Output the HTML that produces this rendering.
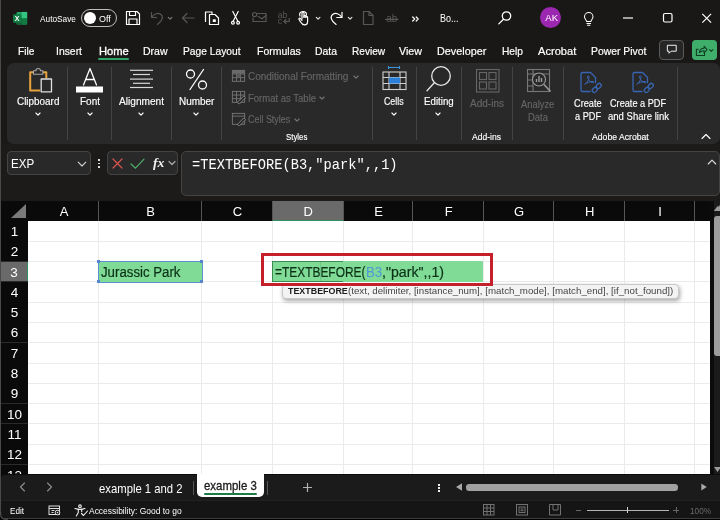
<!DOCTYPE html>
<html>
<head>
<meta charset="utf-8">
<title>Excel</title>
<style>
*{box-sizing:border-box;margin:0;padding:0}
html,body{width:720px;height:520px;overflow:hidden;background:#1b1917;font-family:"Liberation Sans",sans-serif;color:#fff}
#app{position:relative;width:720px;height:520px;background:#1b1917;overflow:hidden;will-change:transform}
.abs{position:absolute}
.t{position:absolute;white-space:nowrap;line-height:1}
/* title bar */
#title{left:0;top:0;width:720px;height:37px;background:#1a1816}
#tabs{left:0;top:37px;width:720px;height:27px;background:#1a1816}
.tab{font-size:11.5px;color:#fff;top:46px;-webkit-text-stroke:.2px #fff}
/* ribbon */
#ribbon{left:7px;top:62.700px;width:712.500px;height:81.800px;background:#292929;border-radius:7px}
.rsep{position:absolute;top:67px;width:1px;height:73px;background:#444}
.rlab{font-size:10.3px;color:#fff;-webkit-text-stroke:.15px currentColor}
.rchev{position:absolute;top:111px}
.dim{color:#666}
/* formula bar */
#fbar{left:0;top:144px;width:720px;height:57px;background:#1d1b19}
#namebox{left:7px;top:151px;width:84px;height:24px;background:#292929;border:1px solid #444;border-radius:4px}
#fbtns{left:107px;top:151px;width:71px;height:24px;background:#292929;border:1px solid #444;border-radius:4px}
#finput{left:181px;top:151px;width:538.800px;height:44.800px;background:#292929;border:1px solid #444;border-radius:5px}
/* grid */
#grid{left:0;top:201px;width:710px;height:273px;background:#fff}
.ch{position:absolute;top:201px;height:19.900px;padding-left:1.500px;background:#0a0a0a;color:#fff;font-size:13px;text-align:center;line-height:21.500px}
.rh{position:absolute;left:1px;width:27.250px;height:20.300px;line-height:20.300px;background:#0a0a0a;color:#fff;font-size:13.500px;text-align:center;padding-top:1px}
.vl{position:absolute;top:221px;width:1px;height:253px;background:#ebebeb}
.hsep{position:absolute;top:201px;width:1px;height:20px;background:#555}
.rsp{position:absolute;left:1px;width:27px;height:1px;background:#2a2a2a}
.hl{position:absolute;left:28.250px;height:1px;width:681.750px;background:#ebebeb}
.ch.sel{background:#6a6a6a;border-bottom:1.200px solid #2f9159}
.rh.sel{background:#6a6a6a;border-right:1.500px solid #2f9159}
.hdl{width:3.200px;height:3.200px;background:#5585cc}
/* bottom */
#sheetbar{left:1px;top:474.200px;width:719px;height:26px;background:#1b1b1c;border-top:1.200px solid #0c0c0c;border-radius:4px 0 0 0}
#status{left:0;top:499.500px;width:720px;height:20.500px;background:#151515;border-top:1.800px solid #212121}
</style>
</head>
<body>
<div id="app">
<div id="title" class="abs"></div>
<div id="tabs" class="abs"></div>

<!-- TITLE BAR -->
<svg class="abs" id="xlicon" style="left:12.500px;top:10.500px" width="15" height="14.500" viewBox="0 0 17 16" preserveAspectRatio="none">
<rect x="4" y="1" width="12" height="14" rx="1.5" fill="#21a366"/><rect x="10" y="1" width="6" height="7" fill="#33c481"/><rect x="10" y="8" width="6" height="7" fill="#107c41"/><rect x="4" y="8" width="6" height="7" fill="#185c37"/>
<rect x="0" y="3.5" width="9.5" height="9.5" rx="1.2" fill="#107c41"/>
<text x="4.75" y="11.2" font-size="8" font-weight="bold" fill="#fff" text-anchor="middle" font-family="Liberation Sans, sans-serif">X</text></svg>
<div class="t" id="autosave" style="left:40px;top:13.500px;font-size:9.8px;color:#fff;transform:scaleX(0.847);transform-origin:0 0">AutoSave</div>
<div class="abs" id="toggle" style="left:81px;top:9px;width:36px;height:18px;border:1px solid #bdbdbd;border-radius:9px"></div>
<div class="abs" style="left:84px;top:12px;width:12px;height:12px;border-radius:6px;background:#fff"></div>
<div class="t" id="offt" style="left:99px;top:13.500px;font-size:9.8px;color:#fff;transform:scaleX(0.915);transform-origin:0 0">Off</div>
<svg class="abs" id="qat" style="left:120px;top:6px" width="320" height="24" viewBox="120 6 320 24" fill="none" stroke="#fff" stroke-width="1.2" stroke-linecap="round" stroke-linejoin="round">
<!-- save -->
<path d="M126.500 11.500h10.500l2.500 2.500v10.500h-13z"/><path d="M129.500 11.500v4h6v-4"/><path d="M129 24.500v-5.500h8v5.500"/>
<!-- undo dim -->
<g stroke="#575757"><path d="M151.500 12.500v5h5"/><path d="M151.800 17.200c2-3.500 6.300-4.800 9-2.800 2.800 2.300 1.800 6.300-3.400 10"/><path d="M168.300 17.300l1.800 1.800 1.800-1.800" stroke="#777"/></g>
<!-- back dim -->
<g stroke="#575757"><path d="M182.500 18h11.500"/><path d="M187 13.500l-4.500 4.500 4.500 4.500"/></g>
<!-- copy/paste -->
<path d="M205.500 21.500v-9.500h6.500v2.500"/><path d="M209.500 14.500h5.500l3.500 3.500v6.500h-9z"/><rect x="212.800" y="19.300" width="3" height="2.700" fill="#fff" stroke="none"/>
<!-- scissors -->
<path d="M232.800 11.500l5.200 10"/><path d="M238.200 11.500l-5.200 10"/><circle cx="232.900" cy="22.800" r="1.400"/><circle cx="238.100" cy="22.800" r="1.400"/>
<!-- mail dim -->
<g stroke="#575757"><path d="M257.500 13.500h8.500v8h-13v-3.500"/><path d="M258.300 16.500l3.700 2.300 4-3.300"/><circle cx="254.600" cy="14.600" r="2.100"/></g>
<!-- abc dim -->
<g stroke="none" fill="#575757" font-family="Liberation Sans, sans-serif" font-size="8.800"><text x="277.700" y="17.800">ab</text><text x="277.700" y="24">c</text></g>
<g stroke="#575757"><path d="M284 21.500h5.200v-3.200"/><path d="M286 19.500l-2 2 2 2"/></g>
<!-- touch -->
<path d="M302 19v-6c0-1.400 2-1.400 2 0v4.500"/><path d="M304 17v-.8c0-1.200 1.800-1.200 1.800 0v1.300"/><path d="M305.800 17.200c0-1.200 1.800-1.200 1.800 0v4.300c0 2-1 3.300-3 3.300s-3-1-4-2.800l-1.600-2.600c-.5-1 .8-1.700 1.500-.8l1.500 1.800"/><path d="M300 16c-1.200-2.300.3-4.500 3-4.500s4 2 3.300 3.800"/>
<path d="M316.300 17.300l1.800 1.800 1.800-1.800" stroke="#ddd"/>
<!-- redo -->
<path d="M342 12.300v5.200h-5.200"/><path d="M341.700 17.200c-2-3.500-6.300-4.800-9-2.800-2.800 2.300-1.800 6.300 3.400 10"/><path d="M348.300 17.300l1.800 1.800 1.800-1.800" stroke="#ddd"/>
<!-- new doc dim -->
<g stroke="#575757"><path d="M363.500 11.500h5.500l4 4v9h-9.500z"/><path d="M369 11.500v4h4"/></g>
<!-- ab strike dim -->
<g stroke="none" fill="#575757" font-family="Liberation Sans, sans-serif" font-size="10"><text x="386.300" y="22">ab</text></g><path d="M385.500 19.300h12.500" stroke="#575757"/>
<!-- >> -->
<path d="M412.700 17l2 2-2 2" stroke-width="1.200"/><path d="M416.200 17l2 2-2 2" stroke-width="1.200"/>
</svg>
<div class="t" id="bo" style="left:439.600px;top:14.200px;font-size:10.2px;color:#fff;transform:scaleX(0.883);transform-origin:0 0">Bo...</div>
<svg class="abs" style="left:496px;top:9px" width="18" height="18" viewBox="0 0 18 18" fill="none" stroke="#fff" stroke-width="1.300" stroke-linecap="round"><circle cx="10.500" cy="7" r="4.200"/><path d="M7.500 10.200l-4.700 4.700"/></svg>
<div class="abs" id="avatar" style="left:540.300px;top:7.200px;width:20.600px;height:20.600px;border-radius:11px;background:#9c27b0"></div>
<div class="t" id="ak" style="left:545.300px;top:13.200px;font-size:9.500px;color:#fff">AK</div>
<svg class="abs" style="left:581px;top:10px" width="15.500" height="17" viewBox="0 0 18 20" fill="none" stroke="#fff" stroke-width="1.200" stroke-linecap="round" stroke-linejoin="round"><path d="M6.500 13.500c0-1.500-2.500-3-2.500-5.500a5 5 0 0 1 10 0c0 2.500-2.500 4-2.500 5.500z"/><path d="M6.800 16h4.400"/><path d="M7.500 18h3"/></svg>
<svg class="abs" style="left:618px;top:8px" width="100" height="20" viewBox="618 8 100 20" fill="none" stroke="#fff" stroke-width="1.200"><path d="M623 18h10"/><rect x="663.500" y="13.500" width="8.500" height="8.500" rx="1.500"/><path d="M702.300 13.800l8.800 8.800M711.100 13.800l-8.800 8.800"/></svg>
<!-- TABS -->
<div class="t tab" id="t_file" style="left:18.3px;transform:scaleX(0.885);transform-origin:0 0">File</div>
<div class="t tab" id="t_insert" style="left:56px;transform:scaleX(0.904);transform-origin:0 0">Insert</div>
<div class="t tab" id="hometab" style="-webkit-text-stroke:.350px #fff;left:98.5px;transform:scaleX(0.971);transform-origin:0 0">Home</div>
<div class="abs" style="left:98px;top:58px;width:31px;height:2px;background:#2ea567;border-radius:1px"></div>
<div class="t tab" id="t_draw" style="left:142.7px;transform:scaleX(0.916);transform-origin:0 0">Draw</div>
<div class="t tab" id="pltab" style="left:182.5px;transform:scaleX(0.890);transform-origin:0 0">Page Layout</div>
<div class="t tab" id="t_form" style="left:257.3px;transform:scaleX(0.912);transform-origin:0 0">Formulas</div>
<div class="t tab" id="t_data" style="left:315.3px;transform:scaleX(0.905);transform-origin:0 0">Data</div>
<div class="t tab" id="t_rev" style="left:351.5px;transform:scaleX(0.880);transform-origin:0 0">Review</div>
<div class="t tab" id="t_view" style="left:399.3px;transform:scaleX(0.930);transform-origin:0 0">View</div>
<div class="t tab" id="devtab" style="left:436.7px;transform:scaleX(0.940);transform-origin:0 0">Developer</div>
<div class="t tab" id="t_help" style="left:501.7px;transform:scaleX(0.888);transform-origin:0 0">Help</div>
<div class="t tab" id="t_acro" style="left:537.5px;transform:scaleX(0.964);transform-origin:0 0">Acrobat</div>
<div class="t tab" id="pptab" style="left:590.7px;transform:scaleX(0.901);transform-origin:0 0">Power Pivot</div>
<div class="abs" style="left:659px;top:40px;width:25px;height:20px;border:1px solid #5a5a5a;border-radius:4px;background:#262626"></div>
<svg class="abs" style="left:665.500px;top:44.300px" width="12" height="11" viewBox="0 0 14 13" fill="none" stroke="#fff" stroke-width="1.100" stroke-linejoin="round"><path d="M1.500 1.500h10.500v7h-6l-2.500 2.500v-2.500h-2z"/></svg>
<div class="abs" style="left:691.500px;top:40px;width:25.500px;height:20px;border-radius:4px;background:#3fae6a"></div>
<svg class="abs" style="left:693.500px;top:43.500px" width="21" height="13.400" viewBox="0 0 22 14" fill="none" stroke="#0f3d22" stroke-width="1.100" stroke-linejoin="round" stroke-linecap="round"><path d="M4.500 5.500h-2v6.500h8.500v-2.500"/><path d="M5.500 9c.5-3 2.500-4.500 5-4.500v-2.200l3.200 3.500-3.200 3.500v-2.300c-2 0-3.800.5-5 2z"/><path d="M16.200 6l1.800 1.800 1.800-1.800"/></svg>
<div id="ribbon" class="abs"></div>

<!-- RIBBON CONTENT -->
<div class="rsep" style="left:67px"></div><div class="rsep" style="left:111px"></div><div class="rsep" style="left:171px"></div><div class="rsep" style="left:221px"></div><div class="rsep" style="left:372px"></div><div class="rsep" style="left:416px"></div><div class="rsep" style="left:461px"></div><div class="rsep" style="left:512px"></div><div class="rsep" style="left:563px"></div><div class="rsep" style="left:677px"></div>

<!-- clipboard icon -->
<svg class="abs" style="left:26px;top:65px" width="30" height="30" viewBox="0 0 30 30" fill="none" stroke-linejoin="round">
<path d="M8 7.300h-3.800v18.200h10" stroke="#e8a33d" stroke-width="2"/><path d="M16.500 7.300h3.800v6" stroke="#e8a33d" stroke-width="2"/>
<path d="M7.500 9.200v-3.400h2.400c0-3 4.600-3 4.600 0h2.400v3.400z" stroke="#a8a8a8" stroke-width="1.100" fill="#292929"/>
<rect x="15.200" y="14" width="10.300" height="12.800" stroke="#e0e0e0" stroke-width="1.300" fill="#292929"/></svg>
<div class="t rlab" id="l_clip" style="left:17px;top:96.500px;transform:scaleX(0.962);transform-origin:0 0">Clipboard</div>
<svg class="abs" style="left:34px;top:110.5px" width="8" height="6" viewBox="0 0 8 6" fill="none" stroke="#fff" stroke-width="1.1" stroke-linecap="round" stroke-linejoin="round"><path d="M1.900 2l2.100 2.100 2.100-2.100"/></svg>
<!-- font icon -->
<svg class="abs" style="left:74px;top:66px" width="32" height="30" viewBox="0 0 32 30" fill="none" stroke="#fff" stroke-width="1.300" stroke-linecap="round" stroke-linejoin="round">
<path d="M9.500 19l6.500-16.500 6.500 16.500"/><path d="M11.800 13.500h8.400"/><rect x="2" y="20.500" width="27" height="6" fill="#fff" stroke="none"/></svg>
<div class="t rlab" id="l_font" style="left:80px;top:96.500px;transform:scaleX(0.970);transform-origin:0 0">Font</div>
<svg class="abs" style="left:86px;top:110.5px" width="8" height="6" viewBox="0 0 8 6" fill="none" stroke="#fff" stroke-width="1.1" stroke-linecap="round" stroke-linejoin="round"><path d="M1.900 2l2.100 2.100 2.100-2.100"/></svg>
<!-- alignment icon -->
<svg class="abs" style="left:126px;top:66px" width="30" height="26" viewBox="0 0 30 26" fill="none" stroke="#d8d8d8" stroke-width="1.200">
<path d="M4 4.300h23"/><path d="M7 8.500h17"/><path d="M4 13.100h23"/><path d="M7 17.300h17"/><path d="M4 21.500h23"/></svg>
<div class="t rlab" id="l_align" style="left:119px;top:96.500px;transform:scaleX(0.983);transform-origin:0 0">Alignment</div>
<svg class="abs" style="left:137px;top:110.5px" width="8" height="6" viewBox="0 0 8 6" fill="none" stroke="#fff" stroke-width="1.1" stroke-linecap="round" stroke-linejoin="round"><path d="M1.900 2l2.100 2.100 2.100-2.100"/></svg>
<!-- percent icon -->
<svg class="abs" style="left:184px;top:66px" width="26" height="26" viewBox="0 0 26 26" fill="none" stroke="#fff" stroke-width="1.300" stroke-linecap="round">
<circle cx="6.500" cy="8" r="4"/><circle cx="18.500" cy="19" r="4"/><path d="M19.500 3.500l-13.500 20"/></svg>
<div class="t rlab" id="l_num" style="left:179px;top:96.500px;transform:scaleX(0.967);transform-origin:0 0">Number</div>
<svg class="abs" style="left:192px;top:110.5px" width="8" height="6" viewBox="0 0 8 6" fill="none" stroke="#fff" stroke-width="1.1" stroke-linecap="round" stroke-linejoin="round"><path d="M1.900 2l2.100 2.100 2.100-2.100"/></svg>
<!-- styles group (dim) -->
<svg class="abs" style="left:230.500px;top:69px" width="15.500" height="13.700" viewBox="0 0 17 15" fill="none" stroke="#777" stroke-width="1"><rect x="1.500" y="1.500" width="13.500" height="12"/><path d="M1.500 5.500h13.500M1.500 9.500h13.500M6 1.500v12M10.500 1.500v12"/><rect x="2" y="2" width="12.500" height="3" fill="#6a6a6a" stroke="none"/><rect x="6" y="5.500" width="4.500" height="4" fill="#5a5a5a" stroke="none"/></svg>
<svg class="abs" style="left:230.500px;top:90px" width="15.500" height="14.600" viewBox="0 0 17 16" fill="none" stroke="#777" stroke-width="1"><rect x="1.500" y="1.500" width="13.500" height="12"/><path d="M1.500 5.500h13.500M1.500 9.500h13.500M6 1.500v12M10.500 1.500v12"/><path d="M7 13.500l7-7 2 2-7 7z" fill="#292929" stroke="#888"/></svg>
<svg class="abs" style="left:230.500px;top:111.500px" width="15.500" height="14.600" viewBox="0 0 17 16" fill="none" stroke="#777" stroke-width="1"><rect x="1.500" y="1.500" width="13.500" height="12"/><path d="M1.500 4.500h13.500"/><path d="M7 13.500l7-7 2 2-7 7z" fill="#292929" stroke="#888"/></svg>
<div class="t rlab dim" id="l_cf" style="left:248px;top:71px;font-size:10.500px;transform:scaleX(0.950);transform-origin:0 0">Conditional Formatting</div>
<svg class="abs" style="left:351.5px;top:73.5px" width="8" height="6" viewBox="0 0 8 6" fill="none" stroke="#777" stroke-width="1.1" stroke-linecap="round" stroke-linejoin="round"><path d="M1.900 2l2.100 2.100 2.100-2.100"/></svg>
<div class="t rlab dim" id="l_ft" style="left:248px;top:92.500px;font-size:10.500px;transform:scaleX(0.906);transform-origin:0 0">Format as Table</div>
<svg class="abs" style="left:318px;top:95px" width="8" height="6" viewBox="0 0 8 6" fill="none" stroke="#777" stroke-width="1.1" stroke-linecap="round" stroke-linejoin="round"><path d="M1.900 2l2.100 2.100 2.100-2.100"/></svg>
<div class="t rlab dim" id="l_cs" style="left:248px;top:114px;font-size:10.500px;transform:scaleX(0.851);transform-origin:0 0">Cell Styles</div>
<svg class="abs" style="left:293px;top:116.5px" width="8" height="6" viewBox="0 0 8 6" fill="none" stroke="#777" stroke-width="1.1" stroke-linecap="round" stroke-linejoin="round"><path d="M1.900 2l2.100 2.100 2.100-2.100"/></svg>
<div class="t rlab" id="g_styles" style="left:286px;top:131.800px;font-size:9.500px;transform:scaleX(0.823);transform-origin:0 0">Styles</div>
<!-- cells icon -->
<svg class="abs" style="left:381px;top:64.800px" width="27" height="27" viewBox="0 0 27 27" fill="none" stroke="#d0d0d0" stroke-width="1.100">
<path d="M7.500 2.500h11M7.500 1v3M18.500 1v3" stroke="#3a96dd"/>
<rect x="2" y="7" width="23" height="17.500"/><path d="M2 12.500h23M2 18.500h23M8 7v17.500M19 7v17.500"/><rect x="8" y="12.500" width="11" height="6" fill="#2b7fd9" stroke="none"/></svg>
<div class="t rlab" id="l_cells" style="left:384.400px;top:96.500px;transform:scaleX(0.856);transform-origin:0 0">Cells</div>
<svg class="abs" style="left:390px;top:110.5px" width="8" height="6" viewBox="0 0 8 6" fill="none" stroke="#fff" stroke-width="1.1" stroke-linecap="round" stroke-linejoin="round"><path d="M1.900 2l2.100 2.100 2.100-2.100"/></svg>
<!-- editing icon -->
<svg class="abs" style="left:424px;top:64px" width="30" height="30" viewBox="0 0 30 30" fill="none" stroke="#e6e6e6" stroke-width="1.300" stroke-linecap="round"><circle cx="17" cy="12" r="9.300"/><path d="M10.300 18.700l-7.300 8"/></svg>
<div class="t rlab" id="l_edit" style="left:423.600px;top:96.500px;transform:scaleX(0.943);transform-origin:0 0">Editing</div>
<svg class="abs" style="left:434px;top:110.5px" width="8" height="6" viewBox="0 0 8 6" fill="none" stroke="#fff" stroke-width="1.1" stroke-linecap="round" stroke-linejoin="round"><path d="M1.900 2l2.100 2.100 2.100-2.100"/></svg>
<!-- add-ins (dim) -->
<svg class="abs" style="left:475px;top:68px" width="26" height="26" viewBox="0 0 26 26" fill="none" stroke="#666" stroke-width="1.100"><rect x="1.500" y="1.500" width="22.500" height="22.500"/><rect x="4.500" y="4.500" width="7" height="7"/><rect x="14" y="4.500" width="7" height="7"/><rect x="4.500" y="14" width="7" height="7"/><rect x="14" y="14" width="7" height="7"/></svg>
<div class="t rlab dim" id="l_addins" style="left:470px;top:98px;font-size:10.500px;color:#666;transform:scaleX(0.955);transform-origin:0 0">Add-ins</div>
<div class="t rlab" id="g_addins" style="left:472px;top:131.800px;font-size:9.500px;transform:scaleX(0.900);transform-origin:0 0">Add-ins</div>
<!-- analyze data (dim) -->
<svg class="abs" style="left:526px;top:68px" width="27" height="27" viewBox="0 0 27 27" fill="none" stroke="#777" stroke-width="1.100"><rect x="1.500" y="1.500" width="22" height="22"/><path d="M1.500 6h22M7 1.500v22M1.500 12h5.500M1.500 18h5.500"/><circle cx="13" cy="11.500" r="6.500" fill="#292929" stroke="#9a9a9a"/><path d="M18 16.500l6.500 7" stroke="#9a9a9a" stroke-width="1.600"/><path d="M10.500 14v-3M13 14v-6M15.500 14v-4" stroke="#9a9a9a" stroke-width="1.400"/></svg>
<div class="t rlab dim" id="l_an1" style="left:521.400px;top:98.500px;font-size:10.500px;color:#666;transform:scaleX(0.891);transform-origin:0 0">Analyze</div>
<div class="t rlab dim" id="l_an2" style="left:528px;top:112px;font-size:10.500px;color:#666;transform:scaleX(0.901);transform-origin:0 0">Data</div>
<!-- pdf icons -->
<svg class="abs" id="pdf1" style="left:578.500px;top:71px" width="25" height="25" viewBox="0 0 25 25" fill="none" stroke="#3966b4" stroke-width="1.300" stroke-linecap="round" stroke-linejoin="round">
<path d="M11 20.500h-7.500c-1 0-1.500-.5-1.500-1.500v-16c0-1 .5-1.500 1.500-1.500h8l5 5v5"/>
<path d="M6 13c2-1 4.500-5 4-7.500-.3-1.200-1.600-.8-1.500.5.200 2.500 3 5.500 5.500 5.800 1.300.1 1.300-1.300 0-1.300-2.500 0-6 1-8 2.500z" stroke-width="1"/>
<rect x="13" y="17" width="5.500" height="4" rx="2" transform="rotate(-45 15.700 19)"/><rect x="17" y="13" width="5.500" height="4" rx="2" transform="rotate(-45 19.700 15)"/></svg>
<svg class="abs" id="pdf2" style="left:630.500px;top:71px" width="25" height="25" viewBox="0 0 25 25" fill="none" stroke="#3966b4" stroke-width="1.300" stroke-linecap="round" stroke-linejoin="round">
<path d="M11 20.500h-7.500c-1 0-1.500-.5-1.500-1.500v-16c0-1 .5-1.500 1.500-1.500h8l5 5v5"/>
<path d="M6 13c2-1 4.500-5 4-7.500-.3-1.200-1.600-.8-1.500.5.200 2.500 3 5.500 5.500 5.800 1.300.1 1.300-1.300 0-1.300-2.500 0-6 1-8 2.500z" stroke-width="1"/>
<rect x="13" y="17" width="5.500" height="4" rx="2" transform="rotate(-45 15.700 19)"/><rect x="17" y="13" width="5.500" height="4" rx="2" transform="rotate(-45 19.700 15)"/></svg>
<div class="t rlab" id="l_c1" style="left:573.600px;top:98.500px;transform:scaleX(0.893);transform-origin:0 0">Create</div>
<div class="t rlab" id="l_c2" style="left:574.800px;top:112px;transform:scaleX(0.891);transform-origin:0 0">a PDF</div>
<div class="t rlab" id="l_c3" style="left:610.200px;top:98.500px;transform:scaleX(0.890);transform-origin:0 0">Create a PDF</div>
<div class="t rlab" id="l_c4" style="left:607.900px;top:112px;transform:scaleX(0.926);transform-origin:0 0">and Share link</div>
<div class="t rlab" id="g_adobe" style="left:592px;top:131.800px;font-size:9.500px;transform:scaleX(0.910);transform-origin:0 0">Adobe Acrobat</div>
<svg class="abs" style="left:701px;top:133px" width="10" height="7" viewBox="0 0 10 7" fill="none" stroke="#fff" stroke-width="1.100" stroke-linecap="round" stroke-linejoin="round"><path d="M1 5.500l4-4 4 4"/></svg>
<div id="fbar" class="abs"></div>
<div id="namebox" class="abs"></div>
<div class="t" id="exp" style="left:11.300px;top:156.500px;font-size:13px;color:#fff;transform:scaleX(0.892);transform-origin:0 0">EXP</div>
<svg class="abs" style="left:77px;top:160px" width="10" height="8" viewBox="0 0 10 8" fill="none" stroke="#d0d0d0" stroke-width="1.100" stroke-linecap="round" stroke-linejoin="round"><path d="M1.200 2.200l3.800 3.800 3.800-3.800"/></svg>
<div class="abs" style="left:97.800px;top:159.200px;width:2px;height:1.900px;background:#ddd"></div><div class="abs" style="left:97.800px;top:162.500px;width:2px;height:1.900px;background:#ddd"></div><div class="abs" style="left:97.800px;top:165.700px;width:2px;height:1.900px;background:#ddd"></div>
<div id="fbtns" class="abs"></div>
<svg class="abs" style="left:110px;top:155px" width="68" height="16" viewBox="110 155 68 16" fill="none" stroke-width="1.200" stroke-linecap="round" stroke-linejoin="round">
<path d="M113 159l9 9M122 159l-9 9" stroke="#d9534f"/>
<path d="M131 164l4.500 4.200 8.500-9" stroke="#4caf6a"/>
<path d="M169 161.500l3 3 3-3" stroke="#aaa"/></svg>
<div class="t" id="fx" style="left:152.500px;top:155.500px;font-size:13.500px;color:#f0f0f0;font-family:'Liberation Serif',serif;font-style:italic;font-weight:bold;transform:scaleX(1.022);transform-origin:0 0">fx</div>
<div id="finput" class="abs"></div>
<div class="t" id="ftext" style="left:191.700px;top:157.500px;font-size:14.500px;color:#fff;font-family:'Liberation Mono',monospace;transform:scaleX(0.945);transform-origin:0 0">=TEXTBEFORE(B3,"park",,1)</div>
<svg class="abs" style="left:707px;top:158px" width="10" height="8" viewBox="0 0 10 8" fill="none" stroke="#e0e0e0" stroke-width="1.100" stroke-linecap="round" stroke-linejoin="round"><path d="M1.200 6l3.800-3.800 3.800 3.800"/></svg>
<div id="grid" class="abs"></div>
<div class="ch" style="left:28.25px;width:70.0px">A</div>
<div class="ch" style="left:98.25px;width:103.25px">B</div>
<div class="ch" style="left:201.5px;width:70.5px">C</div>
<div class="ch sel" style="left:272px;width:71px">D</div>
<div class="ch" style="left:343px;width:69.75px">E</div>
<div class="ch" style="left:412.75px;width:70.5px">F</div>
<div class="ch" style="left:483.25px;width:70.25px">G</div>
<div class="ch" style="left:553.5px;width:70.75px">H</div>
<div class="ch" style="left:624.25px;width:70.25px">I</div>
<div class="ch" style="left:694.5px;width:15.5px"></div>
<div class="vl" style="left:97.75px"></div>
<div class="hsep" style="left:97.75px"></div>
<div class="vl" style="left:201.0px"></div>
<div class="hsep" style="left:201.0px"></div>
<div class="vl" style="left:271.5px"></div>
<div class="hsep" style="left:271.5px"></div>
<div class="vl" style="left:342.5px"></div>
<div class="hsep" style="left:342.5px"></div>
<div class="vl" style="left:412.25px"></div>
<div class="hsep" style="left:412.25px"></div>
<div class="vl" style="left:482.75px"></div>
<div class="hsep" style="left:482.75px"></div>
<div class="vl" style="left:553.0px"></div>
<div class="hsep" style="left:553.0px"></div>
<div class="vl" style="left:623.75px"></div>
<div class="hsep" style="left:623.75px"></div>
<div class="vl" style="left:694.0px"></div>
<div class="hsep" style="left:694.0px"></div>
<div class="rh" style="top:220.90px">1</div>
<div class="hl" style="top:240.70px"></div>
<div class="rsp" style="top:240.70px"></div>
<div class="rh" style="top:241.20px">2</div>
<div class="hl" style="top:261.00px"></div>
<div class="rsp" style="top:261.00px"></div>
<div class="rh sel" style="top:261.50px">3</div>
<div class="hl" style="top:281.30px"></div>
<div class="rsp" style="top:281.30px"></div>
<div class="rh" style="top:281.80px">4</div>
<div class="hl" style="top:301.60px"></div>
<div class="rsp" style="top:301.60px"></div>
<div class="rh" style="top:302.10px">5</div>
<div class="hl" style="top:321.90px"></div>
<div class="rsp" style="top:321.90px"></div>
<div class="rh" style="top:322.40px">6</div>
<div class="hl" style="top:342.20px"></div>
<div class="rsp" style="top:342.20px"></div>
<div class="rh" style="top:342.70px">7</div>
<div class="hl" style="top:362.50px"></div>
<div class="rsp" style="top:362.50px"></div>
<div class="rh" style="top:363.00px">8</div>
<div class="hl" style="top:382.80px"></div>
<div class="rsp" style="top:382.80px"></div>
<div class="rh" style="top:383.30px">9</div>
<div class="hl" style="top:403.10px"></div>
<div class="rsp" style="top:403.10px"></div>
<div class="rh" style="top:403.60px">10</div>
<div class="hl" style="top:423.40px"></div>
<div class="rsp" style="top:423.40px"></div>
<div class="rh" style="top:423.90px">11</div>
<div class="hl" style="top:443.70px"></div>
<div class="rsp" style="top:443.70px"></div>
<div class="rh" style="top:444.20px">12</div>
<div class="hl" style="top:464.00px"></div>
<div class="rsp" style="top:464.00px"></div>
<div class="rh" style="top:464.50px">13</div>
<div class="abs" id="corner" style="left:1px;top:201px;width:27.250px;height:19.900px;background:#0a0a0a"><svg width="27" height="20" style="position:absolute;left:0;top:0"><polygon points="10,17 25,17 25,3" fill="#7a7a7a"/></svg></div>
<!-- B3 cell -->
<div class="abs" id="b3" style="left:98px;top:260.700px;width:104.500px;height:22.100px;background:#80db97;border:1.500px solid #5a8fd0"></div>
<div class="t" id="b3t" style="-webkit-text-stroke:.2px #0c3217;left:101.300px;top:265.200px;font-size:14px;color:#0c3217;transform:scaleX(0.946);transform-origin:0 0">Jurassic Park</div>
<div class="abs hdl" style="left:97.200px;top:260px"></div><div class="abs hdl" style="left:200.200px;top:260px"></div><div class="abs hdl" style="left:97.200px;top:280.300px"></div><div class="abs hdl" style="left:200.200px;top:280.300px"></div>
<!-- D3 cell -->
<div class="abs" id="d3bg" style="left:271.700px;top:261.300px;width:211.300px;height:21px;background:#80db97"></div><div class="abs" style="left:319.500px;top:262px;width:1px;height:20px;background:rgba(0,60,20,.13)"></div>
<div class="abs" id="d3" style="left:271.500px;top:261.200px;width:71.500px;height:21.300px;border:1px solid #3a8a52;border-right:none"></div>
<div class="t" id="d3t1" style="-webkit-text-stroke:.2px #0c3217;left:274.800px;top:265.200px;font-size:14px;color:#0c3217;transform:scaleX(0.852);transform-origin:0 0">=TEXTBEFORE(</div><div class="t" id="d3t2" style="left:365.600px;top:265.200px;font-size:14px;color:#4f97d8;transform:scaleX(0.946);transform-origin:0 0">B3</div><div class="t" id="d3t3" style="-webkit-text-stroke:.2px #0c3217;left:381.800px;top:265.200px;font-size:14px;color:#0c3217;transform:scaleX(1.011);transform-origin:0 0">,"park",,1)</div>
<!-- tooltip -->
<div class="abs" id="tip" style="left:282.300px;top:284px;width:396.500px;height:15.300px;background:#f3f3f3;border:1px solid #c8c8c8;border-radius:4px;box-shadow:1px 2px 4px rgba(0,0,0,.35)"></div>
<div class="t" id="tipb" style="left:288.300px;top:286.800px;font-size:9px;color:#1c1c1c;font-weight:bold;transform:scaleX(0.988);transform-origin:0 0">TEXTBEFORE</div><div class="t" id="tipr" style="left:348.300px;top:286.800px;font-size:9.200px;color:#454545;transform:scaleX(1.058);transform-origin:0 0">(text, delimiter, [instance_num], [match_mode], [match_end], [if_not_found])</div>
<div class="abs" id="redbox" style="left:260.800px;top:253px;width:232px;height:33.300px;border:3.300px solid #c4202c"></div>
<!-- v scrollbar -->
<div class="abs" id="vscroll" style="left:709.800px;top:201px;width:10.200px;height:273.500px;background:#1b1b1b;border-left:4.300px solid #0b0b0b"></div>
<svg class="abs" style="left:713px;top:204px" width="7" height="8" viewBox="0 0 7 8"><polygon points="1,7 7,1 7,7" fill="#9a9a9a"/><polygon points="1,7 4.500,2 8,7" fill="#9a9a9a"/></svg>
<div class="abs" style="left:714.200px;top:216px;width:9px;height:140px;border-radius:3px;background:#9c9c9c"></div>
<svg class="abs" style="left:713px;top:466px" width="7" height="7" viewBox="0 0 7 7"><polygon points="1,1 8,1 4.500,6" fill="#9a9a9a"/></svg>

<div id="sheetbar" class="abs"></div>
<div id="status" class="abs"></div>
<svg class="abs" style="left:16px;top:480px" width="40" height="14" viewBox="16 480 40 14" fill="none" stroke="#8e8e8e" stroke-width="1.100" stroke-linecap="round" stroke-linejoin="round"><path d="M24.500 483l-4 4 4 4"/><path d="M47.500 483l4 4-4 4"/></svg>
<div class="t" id="sh1" style="left:99.200px;top:482.800px;font-size:12.800px;color:#fff;transform:scaleX(0.883);transform-origin:0 0">example 1 and 2</div>
<div class="abs" style="left:193px;top:481px;width:1px;height:14px;background:#555"></div>
<div class="abs" id="acttab" style="left:197px;top:474px;width:67px;height:23px;background:#fff;border-radius:0 0 5px 5px"></div>
<div class="t" id="sh2" style="left:203.600px;top:480.300px;font-size:12.800px;color:#1a1a1a;-webkit-text-stroke:.300px #1a1a1a;transform:scaleX(0.894);transform-origin:0 0">example 3</div>
<div class="abs" style="left:203.500px;top:493.300px;width:53.500px;height:2px;background:#1e7a45;border-radius:1px"></div>
<div class="abs" style="left:267px;top:481px;width:1px;height:14px;background:#555"></div>
<svg class="abs" style="left:302px;top:482px" width="11" height="11" viewBox="0 0 11 11" fill="none" stroke="#b0b0b0" stroke-width="1.200"><path d="M5.500 1v9M1 5.500h9"/></svg>
<div class="abs" style="left:438px;top:484px;width:1.500px;height:1.500px;background:#eee"></div><div class="abs" style="left:438px;top:487px;width:1.500px;height:1.500px;background:#eee"></div><div class="abs" style="left:438px;top:490px;width:1.500px;height:1.500px;background:#eee"></div>
<svg class="abs" style="left:455px;top:482px" width="8" height="10" viewBox="0 0 8 10"><polygon points="7,1.300 7,8.700 1,5" fill="#a8a8a8"/></svg>
<div class="abs" id="hthumb" style="left:466px;top:484px;width:212px;height:6.500px;border-radius:3.300px;background:#a2a2a2"></div>
<svg class="abs" style="left:700px;top:482px" width="8" height="10" viewBox="0 0 8 10"><polygon points="1.300,1.500 1.300,8.500 6.800,5" fill="#a8a8a8"/></svg>
<!-- status -->
<div class="t" id="st_edit" style="left:10.300px;top:506px;font-size:9.500px;color:#fff;transform:scaleX(0.855);transform-origin:0 0">Edit</div>
<svg class="abs" style="left:48px;top:505px" width="14" height="11" viewBox="0 0 14 11" fill="none" stroke="#e0e0e0" stroke-width="1"><rect x="1" y="1" width="10.500" height="8.500"/><path d="M1 3.500h10.500M3.500 5.500h3M3.500 7.500h2" /><circle cx="9.500" cy="7.500" r="2.300" fill="#1a1a1a"/><circle cx="9.500" cy="7.500" r=".8" fill="#e0e0e0" stroke="none"/></svg>
<svg class="abs" style="left:74px;top:504px" width="15" height="13" viewBox="0 0 15 13" fill="none" stroke="#f0f0f0" stroke-width="1.100" stroke-linecap="round" stroke-linejoin="round"><circle cx="6" cy="2.200" r="1.300"/><path d="M1 4.500c3 1 7 1 10 0"/><path d="M4.300 5.200v3.300l-2 3.500M7.700 5.200v2.500"/><path d="M7.500 9.500l2 2 4-4.500"/></svg>
<div class="t" id="st_acc" style="left:89.400px;top:506px;font-size:9.500px;color:#fff;transform:scaleX(0.890);transform-origin:0 0">Accessibility: Good to go</div>
<svg class="abs" style="left:482px;top:503px" width="82" height="14" viewBox="482 503 82 14" fill="none" stroke="#727272" stroke-width="1">
<rect x="483.500" y="504.500" width="10.500" height="10.500"/><path d="M483.500 508h10.500M483.500 511.500h10.500M487 504.500v10.500M490.500 504.500v10.500"/>
<rect x="516.500" y="504.500" width="11" height="10.500"/><rect x="519" y="507" width="6" height="5.500"/><path d="M520.500 509h3M520.500 510.700h3"/>
<path d="M549.500 504.500v10.500h11v-10.500z"/><path d="M553 504.500v5.500h5v-5.500"/></svg>
<div class="abs" style="left:576px;top:509.500px;width:5px;height:1px;background:#666"></div>
<div class="abs" style="left:587px;top:509.500px;width:82px;height:1px;background:#b4b4b4"></div>
<div class="abs" style="left:627px;top:506.800px;width:1.200px;height:6.400px;background:#d0d0d0"></div>
<div class="abs" style="left:673px;top:509.500px;width:6px;height:1px;background:#666"></div><div class="abs" style="left:675.500px;top:507px;width:1px;height:6px;background:#666"></div>
<div class="t" id="st_zoom" style="left:690px;top:505.500px;font-size:9.500px;color:#6a6a6a;transform:scaleX(0.864);transform-origin:0 0">100%</div>
<!-- window border -->
<div class="abs" style="left:0;top:0;width:1.200px;height:520px;background:#4a4a4a"></div>
<div class="abs" style="left:0;top:517.800px;width:720px;height:1.100px;background:#3c3c3c"></div>
<div class="abs" style="left:0;top:518.900px;width:720px;height:1.100px;background:#000"></div>
<svg class="abs" style="left:0;top:512px" width="8" height="8" viewBox="0 0 8 8"><path d="M0 0v8h8v-1h-2.500a4.500 4.500 0 0 1-4.500-4.500v-2.500z" fill="#000"/><path d="M.6 0v2.500a4.800 4.800 0 0 0 4.800 4.800h2.600" fill="none" stroke="#555" stroke-width="1.100"/></svg>
</div>
</body>
</html>
